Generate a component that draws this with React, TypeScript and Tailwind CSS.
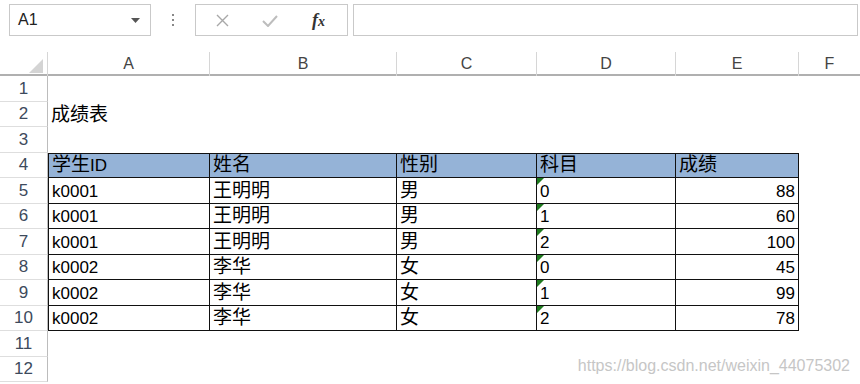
import React from 'react';

const GRID = 'grid grid-cols-[48px_162px_187px_140px_139px_123px_61px]';

const ROW_H = [
  'h-[26px]',
  'h-[25px]',
  'h-[26px]',
  'h-[25px]',
  'h-[26px]',
  'h-[25px]',
  'h-[26px]',
  'h-[25px]',
  'h-[26px]',
  'h-[25px]',
  'h-[26px]',
  'h-[25px]',
];

const HEAD = ['学生ID', '姓名', '性别', '科目', '成绩'];

const DATA = [
  ['k0001', '王明明', '男', '0', '88'],
  ['k0001', '王明明', '男', '1', '60'],
  ['k0001', '王明明', '男', '2', '100'],
  ['k0002', '李华', '女', '0', '45'],
  ['k0002', '李华', '女', '1', '99'],
  ['k0002', '李华', '女', '2', '78'],
];

// CJK glyphs render a little bigger than the latin ones in the sheet
const Txt = ({ text }: { text: string }) => (
  <span className="leading-[20px]">
    {text.split(/([\u4e00-\u9fff]+)/).map((part, i) =>
      /[\u4e00-\u9fff]/.test(part) ? (
        <span key={i} className="text-[19px] leading-[20px]">
          {part}
        </span>
      ) : (
        <span key={i}>{part}</span>
      )
    )}
  </span>
);

const GreenFlag = () => (
  <svg className="absolute left-0 top-0" width="7" height="7" viewBox="0 0 7 7">
    <polygon points="0,0 7,0 0,7" fill="#1f7a1f" />
  </svg>
);

const Toolbar = () => (
  <div className="flex h-[40px] items-start pt-[4px] text-[#444]">
    <div className="ml-[9px] flex h-[32px] w-[142px] items-center justify-between border border-[#c9c9c9] pl-[8px] pr-[10px]">
      <span className="text-[16px] text-[#222]">A1</span>
      <svg width="9" height="5" viewBox="0 0 9 5">
        <polygon points="0,0 9,0 4.5,5" fill="#555" />
      </svg>
    </div>
    <div className="flex h-[32px] w-[44px] flex-col items-center justify-center gap-[3px]">
      <span className="h-[2px] w-[2px] bg-[#888]" />
      <span className="h-[2px] w-[2px] bg-[#888]" />
      <span className="h-[2px] w-[2px] bg-[#888]" />
    </div>
    <div className="flex h-[32px] w-[153px] items-center border border-[#c9c9c9]">
      <svg className="ml-[20px]" width="13" height="13" viewBox="0 0 13 13">
        <path d="M1 1 L12 12 M12 1 L1 12" stroke="#a8a8a8" strokeWidth="1.4" fill="none" />
      </svg>
      <svg className="ml-[33px]" width="16" height="13" viewBox="0 0 16 13">
        <path d="M1 7 L6 12 L15 2" stroke="#bdbdbd" strokeWidth="2" fill="none" />
      </svg>
      <span className="ml-[34px] font-['Liberation_Serif',serif] text-[18px] font-bold italic text-[#333]">
        f<span className="text-[14px]">x</span>
      </span>
    </div>
    <div className="ml-[5px] mr-[2px] h-[32px] flex-1 border border-[#c9c9c9]" />
  </div>
);

const ColumnHeader = () => (
  <div className={`${GRID} mt-[12px] h-[24px] border-b-2 border-[#b0b0b0]`}>
    <div className="relative border-r border-[#d6d6d6]">
      <svg className="absolute bottom-[3px] right-[4px]" width="14" height="14" viewBox="0 0 14 14">
        <polygon points="14,0 14,14 0,14" fill="#d4d4d4" />
      </svg>
    </div>
    {['A', 'B', 'C', 'D', 'E', 'F'].map((c, i) => (
      <div
        key={c}
        className={`flex items-center justify-center text-[16px] text-[#444] ${
          i < 5 ? 'border-r border-[#d6d6d6]' : ''
        }`}
      >
        {c}
      </div>
    ))}
  </div>
);

const SheetRow = ({ n }: { n: number }) => {
  const h = ROW_H[n - 1];
  const inTable = n >= 4 && n <= 10;
  const isHead = n === 4;
  const values = isHead ? HEAD : inTable ? DATA[n - 5] : n === 2 ? ['成绩表', '', '', '', ''] : ['', '', '', '', ''];

  return (
    <div className={`${GRID} ${h} overflow-hidden`}>
      <div className="flex items-end justify-center border-b border-r border-b-[#dedede] border-r-[#bcbcbc] pb-[2px] text-[17px] leading-[20px] text-[#3d4a5c]">
        {n}
      </div>
      {values.map((v, i) => {
        const border = inTable
          ? `border-b border-r border-[#111] ${i === 0 ? 'border-l' : ''} ${isHead ? 'border-t' : ''}`
          : '';
        const align = !isHead && i === 4 ? 'justify-end pr-[3px]' : 'pl-[3px]';
        return (
          <div
            key={i}
            className={`relative flex min-h-0 items-end whitespace-nowrap pb-[1px] text-[17px] leading-[20px] text-black ${border} ${align} ${
              isHead ? 'bg-[#95b3d7]' : ''
            }`}
          >
            {inTable && !isHead && i === 3 && <GreenFlag />}
            <Txt text={v} />
          </div>
        );
      })}
      <div />
    </div>
  );
};

export default function App() {
  return (
    <div className="relative h-[384px] w-[860px] overflow-hidden bg-white font-['Liberation_Sans','Noto_Sans_CJK_SC',sans-serif]">
      <Toolbar />
      <ColumnHeader />
      {Array.from({ length: 12 }, (_, i) => (
        <SheetRow key={i} n={i + 1} />
      ))}
      <div className="absolute bottom-[6px] right-[10px] text-[16px] text-[#c6c6c6]">
        https://blog.csdn.net/weixin_44075302
      </div>
    </div>
  );
}
